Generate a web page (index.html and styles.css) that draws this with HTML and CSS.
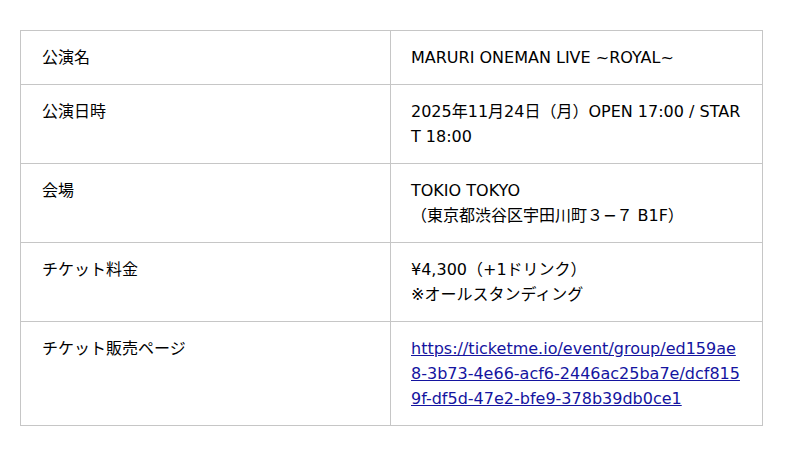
FILE: index.html
```html
<!DOCTYPE html>
<html lang="ja">
<head>
<meta charset="utf-8">
<link rel="stylesheet" href="styles.css">
</head>
<body>
<div class="wrap">
<table class="info">
<colgroup><col class="c1"><col class="c2"></colgroup>
<tr><th>公演名</th><td>MARURI ONEMAN LIVE ~ROYAL~</td></tr>
<tr><th>公演日時</th><td>2025年11月24日（月）OPEN 17:00 / START 18:00</td></tr>
<tr><th>会場</th><td>TOKIO TOKYO<br>（東京都渋谷区宇田川町３−７ B1F）</td></tr>
<tr><th>チケット料金</th><td>¥4,300（+1ドリンク）<br>※オールスタンディング</td></tr>
<tr><th>チケット販売ページ</th><td><a href="#">https://ticketme.io/event/group/ed159ae8-3b73-4e66-acf6-2446ac25ba7e/dcf8159f-df5d-47e2-bfe9-378b39db0ce1</a></td></tr>
</table>
</div>
</body>
</html>
```
FILE: styles.css
```css
html, body { margin: 0; background: #fff; }
.wrap { padding: 30px 38px 0 20px; }
.info {
  width: 742px;
  border-collapse: collapse;
  table-layout: fixed;
  font-family: "DejaVu Sans", "Noto Sans CJK JP", sans-serif;
  font-size: 16px;
  line-height: 25px;
  color: #000;
}
.c1 { width: 370px; }
.c2 { width: 372px; }
.info th, .info td {
  border: 1px solid #c6c6c6;
  padding: 14px 20px 14px 21px;
  vertical-align: top;
  text-align: left;
  font-weight: normal;
  word-break: break-all;
}
.info td { padding-left: 20px; }
.info a { color: #1414a0; }
```
